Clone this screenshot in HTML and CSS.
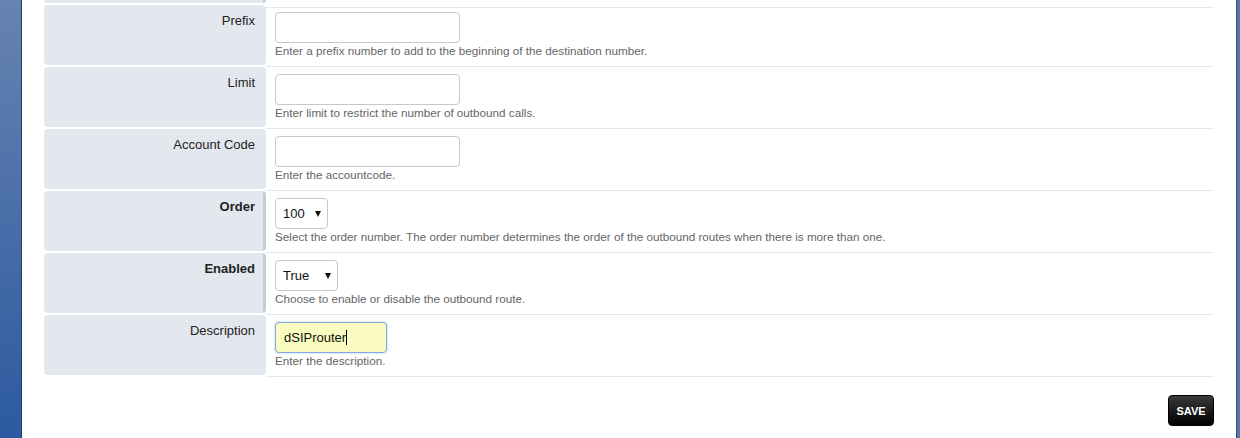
FILE: index.html
```html
<!DOCTYPE html>
<html>
<head>
<meta charset="utf-8">
<link rel="stylesheet" href="styles.css">
</head>
<body>
<div class="sidebar"></div>
<main class="main">
  <div class="form">
    <div class="row row-partial">
      <div class="label required"></div>
      <div class="field"></div>
    </div>
    <div class="row">
      <div class="label">Prefix</div>
      <div class="field">
        <input class="text-input" type="text">
        <div class="help">Enter a prefix number to add to the beginning of the destination number.</div>
      </div>
    </div>
    <div class="row">
      <div class="label">Limit</div>
      <div class="field">
        <input class="text-input" type="text">
        <div class="help">Enter limit to restrict the number of outbound calls.</div>
      </div>
    </div>
    <div class="row">
      <div class="label">Account Code</div>
      <div class="field">
        <input class="text-input" type="text">
        <div class="help">Enter the accountcode.</div>
      </div>
    </div>
    <div class="row">
      <div class="label required">Order</div>
      <div class="field">
        <span class="select-wrap"><select class="select select-order"><option>100</option></select></span>
        <div class="help">Select the order number. The order number determines the order of the outbound routes when there is more than one.</div>
      </div>
    </div>
    <div class="row">
      <div class="label required">Enabled</div>
      <div class="field">
        <span class="select-wrap"><select class="select select-enabled"><option>True</option></select></span>
        <div class="help">Choose to enable or disable the outbound route.</div>
      </div>
    </div>
    <div class="row">
      <div class="label">Description</div>
      <div class="field">
        <span class="desc-wrap"><input class="text-input desc-input" type="text" value="dSIProuter"><span class="caret"></span></span>
        <div class="help">Enter the description.</div>
      </div>
    </div>
  </div>
  <div class="actions">
    <button class="save-btn">SAVE</button>
  </div>
</main>
<div class="rightbar"></div>
</body>
</html>
```
FILE: styles.css
```css
html, body {
  margin: 0;
  padding: 0;
  height: 438px;
  overflow: hidden;
}
body {
  display: flex;
  font-family: "Liberation Sans", Arial, sans-serif;
  background: #fff;
}
.sidebar {
  width: 21px;
  flex: none;
  background: linear-gradient(to bottom, #6684b1 0%, #4a6ea8 50%, #2c5aa0 100%);
  border-right: 1px solid #22406e;
}
.rightbar {
  width: 3px;
  flex: none;
  background: #5676a6;
  border-left: 1px solid #33507e;
}
.main {
  flex: 1;
  padding: 0 22px;
  background: #fff;
}
.form {
  display: flex;
  flex-direction: column;
}
.row {
  display: flex;
  height: 62px;
}
.row-partial {
  height: 5px;
}
.label {
  width: 222px;
  flex: none;
  box-sizing: border-box;
  margin-bottom: 2px;
  background: #e3e7ee;
  border-radius: 4px;
  padding: 8px 11px 0 0;
  text-align: right;
  font-size: 13px;
  line-height: 15px;
  color: #222;
}
.row-partial .label {
  border-radius: 0 0 4px 4px;
  padding: 0;
}
.label.required {
  font-weight: bold;
  border-right: 3px solid #c9ccd3;
  padding-right: 8px;
}
.field {
  flex: 1;
  box-sizing: border-box;
  border-bottom: 1px solid #e3e8ef;
  padding: 7px 0 0 9px;
}
.text-input {
  display: block;
  box-sizing: border-box;
  width: 185px;
  height: 31px;
  margin: 0;
  border: 1px solid #c8c8c8;
  border-radius: 4px;
  background: #fff;
  font-family: "Liberation Sans", Arial, sans-serif;
  font-size: 13px;
  padding: 0 8px;
  color: #111;
  outline: none;
}
.help {
  margin-top: 1px;
  font-size: 11.7px;
  line-height: 13px;
  color: #666;
}
.select-wrap {
  position: relative;
  display: block;
  width: max-content;
}
.select {
  display: block;
  box-sizing: border-box;
  height: 31px;
  appearance: none;
  -webkit-appearance: none;
  border: 1px solid #c8c8c8;
  border-radius: 4px;
  background: #fff;
  font-family: "Liberation Sans", Arial, sans-serif;
  font-size: 13px;
  color: #111;
  padding: 0 0 0 7px;
  outline: none;
}
.select-order { width: 53px; }
.select-enabled { width: 63px; }
.select-wrap::after {
  content: "";
  position: absolute;
  right: 7px;
  top: 13px;
  border-left: 3.5px solid transparent;
  border-right: 3.5px solid transparent;
  border-top: 6px solid #111;
  pointer-events: none;
}
.desc-wrap {
  position: relative;
  display: block;
  width: max-content;
}
.desc-input {
  width: 112px;
  background: #fafcc0;
  border: 1px solid #83a9e3;
  box-shadow: 0 0 2px rgba(100, 150, 230, 0.6);
}
.caret {
  position: absolute;
  left: 71px;
  top: 8px;
  width: 1px;
  height: 15px;
  background: #000;
}
.actions {
  display: flex;
  justify-content: flex-end;
  padding-top: 18px;
}
.save-btn {
  box-sizing: border-box;
  width: 46px;
  height: 31px;
  border: 1px solid #000;
  border-radius: 4px;
  background: linear-gradient(to bottom, #3a3a3a 0%, #161616 60%, #000 100%);
  color: #fff;
  font-family: "Liberation Sans", Arial, sans-serif;
  font-weight: bold;
  font-size: 11px;
  padding: 0;
  cursor: pointer;
}
```
